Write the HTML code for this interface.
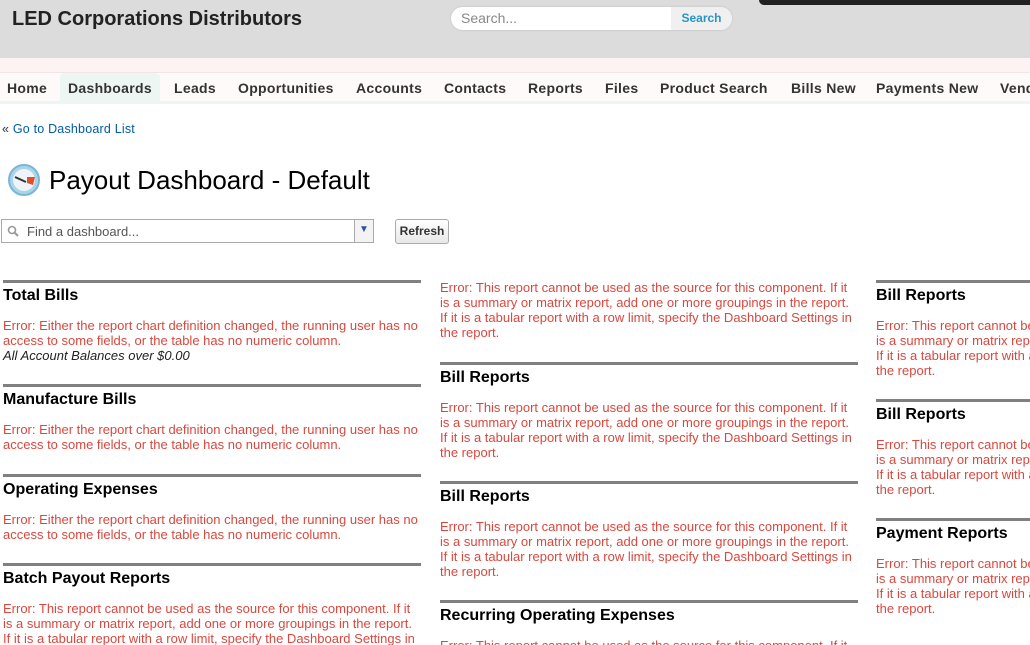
<!DOCTYPE html>
<html><head><style>
html,body{margin:0;width:1030px;height:645px;overflow:hidden}
body{background:#fff;font-family:"Liberation Sans",Arial,sans-serif;position:relative}
.hdr{position:absolute;left:0;top:0;width:1030px;height:58px;background:#dcdcdc}
.pink{position:absolute;left:0;top:58px;width:1030px;height:14px;background:#fdf3f3}
.nav{position:absolute;left:0;top:72px;width:1030px;height:32px;background:#fffafa;border-top:1px solid #f0e6e6;border-bottom:3px solid #eef6f4;box-sizing:border-box}
.nav span{position:absolute;top:8px;font-size:14px;font-weight:bold;color:#333;white-space:nowrap;letter-spacing:0.3px}
.tab{position:absolute;left:60px;top:73px;width:100px;height:31px;background:#eef6f4;border-radius:4px 4px 0 0}
.title{position:absolute;left:12px;top:8px;font-size:20px;font-weight:bold;color:#222}
.search{position:absolute;left:451px;top:7px;width:281px;height:23px;background:#fff;border-radius:12px;box-shadow:0 0 2px #bbb}
.search .t{position:absolute;left:10px;top:3px;font-size:14px;color:#888}
.search .b{position:absolute;left:220px;top:0;width:61px;height:23px;background:#f0f0f0;border-radius:0 12px 12px 0;color:#2a94c8;font-size:12px;font-weight:bold;text-align:center;line-height:23px}
.blk{position:absolute;left:759px;top:-6px;width:280px;height:11px;background:#222;border-radius:5px}
.sec{position:absolute;width:418px;border-top:3px solid #808080}
.sec h3{margin:3px 0 0;font-size:16px;line-height:20px;color:#000}
.err{margin-top:12px;font-size:13px;line-height:15px;color:#d8483f}
.noline{border-top:none}
.clip{position:absolute;left:0;top:0;width:1030px;height:645px;overflow:hidden}
</style></head><body>
<div class="hdr"></div>
<div class="blk"></div>
<div class="title">LED Corporations Distributors</div>
<div class="search"><div class="t">Search...</div><div class="b">Search</div></div>
<div class="pink"></div>
<div class="nav"></div>
<div class="tab"></div>
<div class="clip" style="top:72px;height:32px">
<div class="nav" style="top:0;background:none;border:none">
<span style="left:7px">Home</span><span style="left:68px">Dashboards</span><span style="left:174px">Leads</span><span style="left:238px">Opportunities</span><span style="left:356px">Accounts</span><span style="left:444px">Contacts</span><span style="left:528px">Reports</span><span style="left:605px">Files</span><span style="left:660px">Product Search</span><span style="left:791px">Bills New</span><span style="left:876px">Payments New</span><span style="left:1000px">Vendors</span>
</div></div>
<div style="position:absolute;left:2px;top:122px;font-size:12.5px;color:#015ba7;letter-spacing:0.2px"><span style="color:#333">«</span> Go to Dashboard List</div>
<svg style="position:absolute;left:7px;top:163px" width="34" height="34" viewBox="0 0 34 34"><circle cx="17" cy="17" r="15" fill="#a9d4ea" stroke="#7ab6d6" stroke-width="2"/><circle cx="17" cy="17" r="11" fill="#eef4f8"/><path d="M20 14 L28 14 L26 22 L20 20Z" fill="#e0502a"/><path d="M8 14 L19 19" stroke="#333" stroke-width="2"/></svg>
<div style="position:absolute;left:49px;top:165px;font-size:26px;color:#000">Payout Dashboard - Default</div>
<div style="position:absolute;left:1px;top:219px;width:373px;height:24px;border:1px solid #aaa;box-sizing:border-box;background:#fff">
<svg style="position:absolute;left:5px;top:5px" width="12" height="12" viewBox="0 0 12 12"><circle cx="5" cy="5" r="3.5" fill="none" stroke="#999" stroke-width="1.6"/><path d="M7.5 7.5 L11 11" stroke="#999" stroke-width="2"/></svg>
<span style="position:absolute;left:25px;top:4px;font-size:13px;color:#555">Find a dashboard...</span>
<div style="position:absolute;right:0;top:0;width:18px;height:22px;border-left:1px solid #aaa;background:#f3f3f3;color:#2b5797;font-size:10px;text-align:center;line-height:20px">▼</div></div>
<div style="position:absolute;left:395px;top:219px;width:54px;height:25px;border:1px solid #aaa;border-radius:3px;box-sizing:border-box;background:linear-gradient(#fff,#e8e8e8);font-size:12px;font-weight:bold;text-align:center;line-height:23px;color:#333">Refresh</div>

<div class="clip">
<div class="sec" style="left:3px;top:280px"><h3>Total Bills</h3><div class="err">Error: Either the report chart definition changed, the running user has no access to some fields, or the table has no numeric column.<br><i style="color:#222">All Account Balances over $0.00</i></div></div>
<div class="sec" style="left:3px;top:384px"><h3>Manufacture Bills</h3><div class="err">Error: Either the report chart definition changed, the running user has no access to some fields, or the table has no numeric column.</div></div>
<div class="sec" style="left:3px;top:474px"><h3>Operating Expenses</h3><div class="err">Error: Either the report chart definition changed, the running user has no access to some fields, or the table has no numeric column.</div></div>
<div class="sec" style="left:3px;top:563px"><h3>Batch Payout Reports</h3><div class="err">Error: This report cannot be used as the source for this component. If it is a summary or matrix report, add one or more groupings in the report. If it is a tabular report with a row limit, specify the Dashboard Settings in the report.</div></div>

<div class="sec noline" style="left:440px;top:280px"><div class="err" style="margin-top:0">Error: This report cannot be used as the source for this component. If it is a summary or matrix report, add one or more groupings in the report. If it is a tabular report with a row limit, specify the Dashboard Settings in the report.</div></div>
<div class="sec" style="left:440px;top:362px"><h3>Bill Reports</h3><div class="err">Error: This report cannot be used as the source for this component. If it is a summary or matrix report, add one or more groupings in the report. If it is a tabular report with a row limit, specify the Dashboard Settings in the report.</div></div>
<div class="sec" style="left:440px;top:481px"><h3>Bill Reports</h3><div class="err">Error: This report cannot be used as the source for this component. If it is a summary or matrix report, add one or more groupings in the report. If it is a tabular report with a row limit, specify the Dashboard Settings in the report.</div></div>
<div class="sec" style="left:440px;top:600px"><h3>Recurring Operating Expenses</h3><div class="err">Error: This report cannot be used as the source for this component. If it is a summary or matrix report.</div></div>

<div class="sec" style="left:876px;top:280px"><h3>Bill Reports</h3><div class="err">Error: This report cannot be used as the source for this component. If it is a summary or matrix report, add one or more groupings in the report. If it is a tabular report with a row limit, specify the Dashboard Settings in the report.</div></div>
<div class="sec" style="left:876px;top:399px"><h3>Bill Reports</h3><div class="err">Error: This report cannot be used as the source for this component. If it is a summary or matrix report, add one or more groupings in the report. If it is a tabular report with a row limit, specify the Dashboard Settings in the report.</div></div>
<div class="sec" style="left:876px;top:518px"><h3>Payment Reports</h3><div class="err">Error: This report cannot be used as the source for this component. If it is a summary or matrix report, add one or more groupings in the report. If it is a tabular report with a row limit, specify the Dashboard Settings in the report.<div style="margin-top:30px">Error: The source report used for this component.</div></div></div>
</div>
</body></html>
